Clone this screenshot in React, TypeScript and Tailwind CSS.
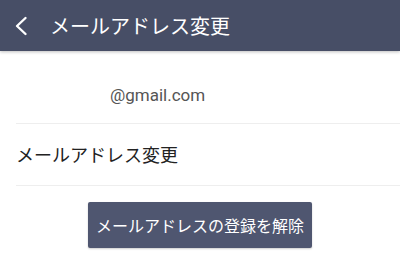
const jp = { fontFamily: '"Noto Sans CJK JP", "Noto Sans", sans-serif' };

export default function App() {
  return (
    <div className="w-[400px] h-[273px] bg-white overflow-hidden" style={jp}>
      {/* header */}
      <div className="h-[51px] bg-[#474e66] flex items-center shadow-[0_1px_3px_rgba(0,0,0,0.25)] relative">
        <svg className="ml-[14px] w-[16px] h-[20px]" viewBox="0 0 16 20" fill="none">
          <polyline points="11.5,2 3,10 11.5,18" stroke="white" strokeWidth="2.4" strokeLinecap="round" strokeLinejoin="round" />
        </svg>
        <span className="ml-[20px] text-[20px] text-white leading-none">メールアドレス変更</span>
      </div>

      <div className="pl-4">
        <div className="h-[73px] flex items-center pt-[18px] border-b border-[#eeeeee]">
          <span
            className="ml-[94px] text-[17px] text-[#555555]"
            style={{ fontFamily: 'Roboto, "Liberation Sans", sans-serif' }}
          >
            @gmail.com
          </span>
        </div>
        <div className="h-[62px] flex items-center border-b border-[#eeeeee]">
          <span className="text-[18px] text-[#222222]">メールアドレス変更</span>
        </div>
      </div>

      <div className="flex justify-center pt-[16px]">
        <button className="w-[224px] h-[46px] bg-[#4f5670] text-white text-[16px] rounded-[2px] shadow-[0_1px_2px_rgba(0,0,0,0.2)]">
          メールアドレスの登録を解除
        </button>
      </div>
    </div>
  );
}
